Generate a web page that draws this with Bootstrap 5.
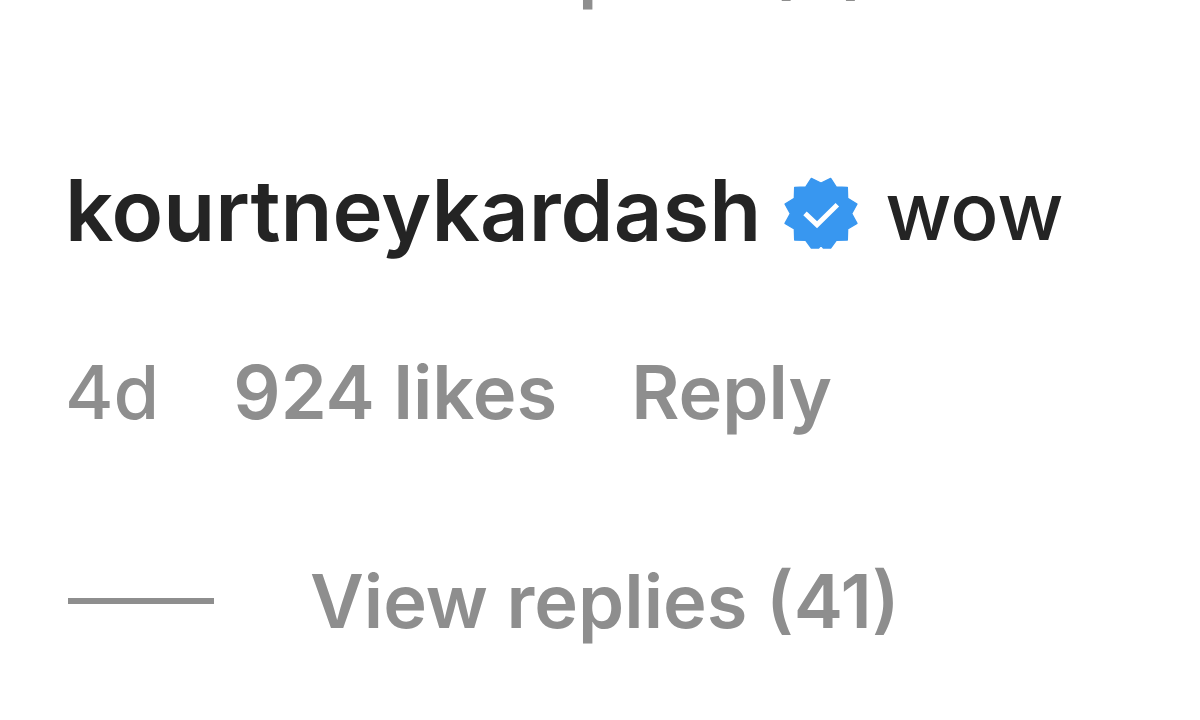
<!DOCTYPE html>
<html lang="en">
<head>
<meta charset="utf-8">
<meta name="viewport" content="width=device-width, initial-scale=1">
<title>Comments</title>
<link href="https://cdn.jsdelivr.net/npm/bootstrap@5.3.0/dist/css/bootstrap.min.css" rel="stylesheet">
<style>
body{font-family:Inter,"Liberation Sans",sans-serif;color:#242424;background:#fff}
.comment-list{padding:0 65px}
.comment-link{color:inherit;text-decoration:none}
.name-row{font-size:85px;line-height:108px;margin-top:142px}
.comment-body{font-size:80px;font-weight:500}
.badge-icon{width:74px;height:72px;margin:4px 27px 0 23px}
.meta-text{font-size:74px;line-height:96px;color:#8e8e8e}
.meta-row{gap:74px;margin-top:79px}
.age{font-weight:500}
.replies-row{margin-top:113px}
.text-btn{color:#8e8e8e;border:0;background:none;padding:0;font-weight:600}
.rule{width:146px;height:6px;background:#8e8e8e;margin:0 96px 0 3px}
.rule-space{background:none}
.earlier{height:15px}
</style>
</head>
<body>
<main class="comment-list overflow-hidden">
<div class="earlier meta-text d-flex align-items-end overflow-hidden text-nowrap"><span class="rule rule-space flex-shrink-0"></span><button type="button" class="text-btn">View replies (4)</button></div>
<article>
<div class="name-row d-flex align-items-center text-nowrap">
<a href="#" class="comment-link fw-semibold">kourtneykardash</a>
<svg class="badge-icon flex-shrink-0" viewBox="40 36 222 216" role="img" aria-label="Verified">
<path fill="#3897f0" stroke="#3897f0" stroke-width="4" stroke-linejoin="round" d="M259 117 243 146 259 175 231 192 230 225 197 226 180 249 158 249 151 241 144 249 122 249 105 226 72 225 71 192 43 175 59 146 43 117 71 100 72 67 105 66 122 40 151 54 180 40 197 66 230 67 231 100Z"/>
<path fill="none" stroke="#fff" stroke-width="15" d="M103 145 139 179 200 119"/>
</svg>
<span class="comment-body">wow</span>
</div>
<div class="meta-row meta-text d-flex text-nowrap"><time class="age">4d</time><button type="button" class="text-btn">924 likes</button><button type="button" class="text-btn">Reply</button></div>
<div class="replies-row meta-text d-flex align-items-center text-nowrap"><span class="rule flex-shrink-0"></span><button type="button" class="text-btn">View replies (41)</button></div>
</article>
</main>
<script src="https://cdn.jsdelivr.net/npm/bootstrap@5.3.0/dist/js/bootstrap.bundle.min.js"></script>
</body>
</html>
